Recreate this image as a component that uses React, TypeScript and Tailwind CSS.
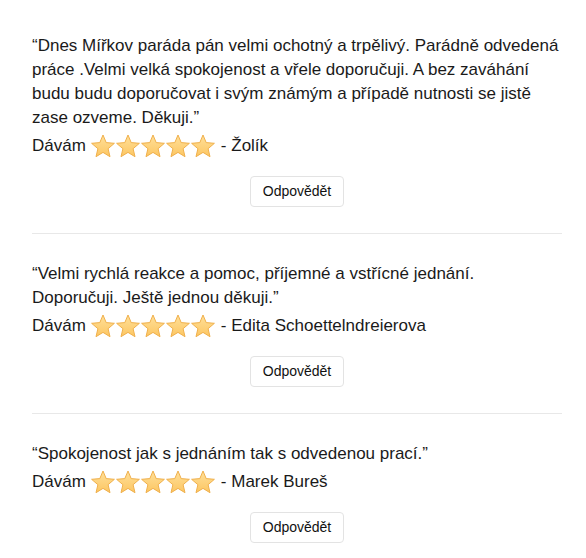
const reviews = [
  {
    text: "“Dnes Mířkov paráda pán velmi ochotný a trpělivý. Parádně odvedená práce .Velmi velká spokojenost a vřele doporučuji. A bez zaváhání budu budu doporučovat i svým známým a případě nutnosti se jistě zase ozveme. Děkuji.”",
    author: "Žolík",
  },
  {
    text: "“Velmi rychlá reakce a pomoc, příjemné a vstřícné jednání. Doporučuji. Ještě jednou děkuji.”",
    author: "Edita Schoettelndreierova",
  },
  {
    text: "“Spokojenost jak s jednáním tak s odvedenou prací.”",
    author: "Marek Bureš",
  },
];

const Star = ({ id }: { id: string }) => (
  <svg width="24" height="24" viewBox="0 0 24 24" className="block">
    <defs>
      <linearGradient id={id} x1="0" y1="0" x2="0" y2="1">
        <stop offset="0%" stopColor="#ffe09a" />
        <stop offset="100%" stopColor="#fcc662" />
      </linearGradient>
    </defs>
    <path
      d="M12 1L15.2 8.6L23.4 9.3L17.1 14.7L19 22.7L12 18.4L5 22.7L6.9 14.7L0.6 9.3L8.8 8.6Z"
      fill={`url(#${id})`}
      stroke="#f0b04c"
      strokeWidth="1"
      strokeLinejoin="round"
    />
  </svg>
);

const Review = ({ text, author, idx }: { text: string; author: string; idx: number }) => (
  <div className="border-b border-[#e8e8e8] pb-[26px] pt-[28px] first:pt-[34px]">
    <p className="leading-[24px]">{text}</p>
    <div className="mt-[3px] flex h-[26px] items-center">
      <span>Dávám</span>
      <span className="ml-[5px] flex gap-px">
        {[0, 1, 2, 3, 4].map((i) => (
          <Star key={i} id={`g${idx}-${i}`} />
        ))}
      </span>
      <span className="ml-[6px]">- {author}</span>
    </div>
    <div className="mt-[17px] flex justify-center">
      <button className="h-[31px] rounded-[4px] border border-[#e3e3e3] bg-white px-3 text-[14px] text-[#111]">
        Odpovědět
      </button>
    </div>
  </div>
);

const App = () => {
  return (
    <div
      className="min-h-[558px] bg-white pl-8 pr-6 text-[17px] text-[#1a1a1a]"
      style={{ fontFamily: "'Liberation Sans', Arial, sans-serif" }}
    >
      {reviews.map((r, i) => (
        <Review key={i} text={r.text} author={r.author} idx={i} />
      ))}
    </div>
  );
};

export default App;
